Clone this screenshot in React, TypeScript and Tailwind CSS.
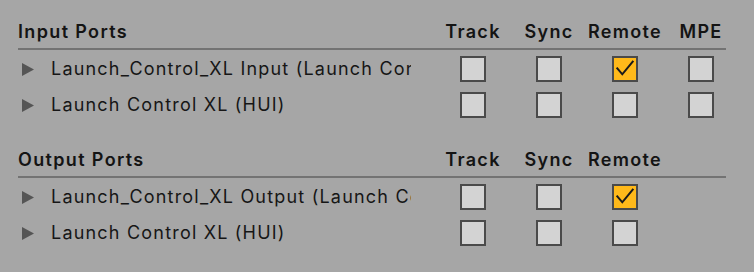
import React from "react";

const font = { fontFamily: '"Inter", "Liberation Sans", sans-serif' };

function Box({ checked }: { checked?: boolean }) {
  return (
    <div
      className={
        "w-[26px] h-[26px] border-2 border-[#4a4a4a] shrink-0 flex items-center justify-center " +
        (checked ? "bg-[#ffb91a]" : "bg-[#d3d3d3]")
      }
    >
      {checked && (
        <svg width="22" height="22" viewBox="0 0 22 22" fill="none">
          <path d="M3.3 10.3 L8.3 16.3 L18.7 3.7" stroke="#1a1a1a" strokeWidth="2" strokeLinecap="square" />
        </svg>
      )}
    </div>
  );
}

function Triangle() {
  return (
    <svg width="12" height="13" viewBox="0 0 12 13" className="shrink-0">
      <path d="M0 0 L12 6.5 L0 13 Z" fill="#555555" />
    </svg>
  );
}

type Row = { name: string; checks: (boolean | null)[] };

function Section({ title, cols, rows }: { title: string; cols: string[]; rows: Row[] }) {
  return (
    <div className="flex flex-col">
      <div className="h-[30px] flex items-start pt-[2px]">
        <div className="flex-1 text-[18px] leading-[24px] font-semibold text-[#141414] tracking-[1.35px]">{title}</div>
        <div className="flex gap-[26px]">
          {[0, 1, 2, 3].map((i) => (
            <div key={i} className="w-[50px] flex justify-center text-[18px] leading-[24px] font-semibold text-[#141414] tracking-[1.3px] whitespace-nowrap">
              {cols[i] ?? ""}
            </div>
          ))}
        </div>
      </div>
      <div className="h-[2px] bg-[#737373]" />
      <div className="flex flex-col gap-[10px] pt-[6px]">
        {rows.map((r, ri) => (
          <div key={ri} className="h-[26px] flex items-center">
            <div className="w-[4px]" />
            <Triangle />
            <div className="w-[17px]" />
            <div className="w-[360px] overflow-hidden whitespace-nowrap text-[18px] leading-[24px] text-[#161616] tracking-[1.2px]">
              {r.name}
            </div>
            <div className="flex-1" />
            <div className="flex gap-[26px]">
              {r.checks.map((c, ci) => (
                <div key={ci} className="w-[50px] flex justify-center">
                  {c !== null && <Box checked={c} />}
                </div>
              ))}
            </div>
          </div>
        ))}
      </div>
    </div>
  );
}

export default function App() {
  return (
    <div className="w-[754px] h-[272px] bg-[#a6a6a6] overflow-hidden" style={font}>
      <div className="pl-[18px] pr-[28px] pt-[18px] flex flex-col gap-[28px]">
        <Section
          title="Input Ports"
          cols={["Track", "Sync", "Remote", "MPE"]}
          rows={[
            { name: "Launch_Control_XL Input (Launch Control_XL)", checks: [false, false, true, false] },
            { name: "Launch Control XL (HUI)", checks: [false, false, false, false] },
          ]}
        />
        <Section
          title="Output Ports"
          cols={["Track", "Sync", "Remote"]}
          rows={[
            { name: "Launch_Control_XL Output (Launch Control_XL)", checks: [false, false, true, null] },
            { name: "Launch Control XL (HUI)", checks: [false, false, false, null] },
          ]}
        />
      </div>
    </div>
  );
}
